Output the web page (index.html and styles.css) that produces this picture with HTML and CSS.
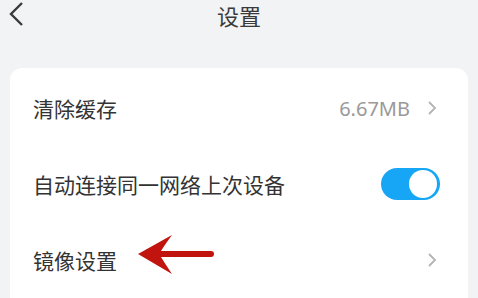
FILE: index.html
```html
<!DOCTYPE html>
<html>
<head lang="zh">
    <meta charset="UTF-8">
    <title>设置</title>
    <link rel="stylesheet" href="styles.css">
</head>
<body>
<div class="header">
    <div class="back">
        <svg width="16" height="26" viewBox="0 0 16 26">
            <path d="M14 2 L3 13 L14 24" fill="none" stroke="#3a3a3a" stroke-width="2.4" stroke-linejoin="miter"/>
        </svg>
    </div>
    <div class="title">设置</div>
</div>

<div class="card">
    <div class="row">
        <span class="label">清除缓存</span>
        <div class="extra">
            <span class="value">6.67MB</span>
            <svg class="more" width="10" height="16" viewBox="0 0 10 16">
                <path d="M2 2 L8 8 L2 14" fill="none" stroke="#b3b3b3" stroke-width="1.8"/>
            </svg>
        </div>
    </div>
    <div class="row">
        <span class="label">自动连接同一网络上次设备</span>
        <div class="switch on">
            <div class="knob"></div>
        </div>
    </div>
    <div class="row mirror">
        <span class="label">镜像设置</span>
        <svg class="more" width="10" height="16" viewBox="0 0 10 16">
            <path d="M2 2 L8 8 L2 14" fill="none" stroke="#b3b3b3" stroke-width="1.8"/>
        </svg>
        <!-- 标注箭头 -->
        <svg class="pointer" width="80" height="44" viewBox="0 0 80 44">
            <line x1="22" y1="21" x2="75" y2="21" stroke="#c2140e" stroke-width="6" stroke-linecap="round"/>
            <path d="M2 21 L36 2 Q28 13 25 18 L25 24 Q28 29 36 41 Z" fill="#c2140e"/>
        </svg>
    </div>
</div>
</body>
</html>
```

FILE: styles.css
```css
* {
    margin: 0;
    padding: 0;
}

body {
    background-color: #f2f3f5;
    font-family: "Noto Sans CJK SC", "Noto Sans", sans-serif;
    color: #333333;
    overflow: hidden;
}

.header {
    height: 30px;
    position: relative;
}

.header .back {
    position: absolute;
    left: 8px;
    top: 1px;
}

.header .title {
    text-align: center;
    font-size: 22px;
    line-height: 30px;
    color: #3a3a3a;
}

.card {
    margin: 38px 10px 0;
    padding-top: 2px;
    background-color: #ffffff;
    border-radius: 12px 12px 0 0;
}

.row {
    height: 76px;
    padding: 0 28px 0 23px;
    display: flex;
    align-items: center;
    justify-content: space-between;
    position: relative;
}

.row .label {
    font-size: 21px;
}

.extra {
    display: flex;
    align-items: center;
    gap: 17px;
}

.value {
    font-family: "Noto Sans", sans-serif;
    font-size: 20px;
    color: #999999;
}

.more {
    display: block;
    margin-right: 3px;
}

.switch {
    width: 59px;
    height: 32px;
    border-radius: 16px;
    background-color: #e5e5e5;
    display: flex;
    align-items: center;
    padding: 0 3px;
    box-sizing: border-box;
}

.switch.on {
    background-color: #17a6f6;
    justify-content: flex-end;
}

.switch .knob {
    width: 28px;
    height: 28px;
    border-radius: 50%;
    background-color: #ffffff;
}

.mirror .pointer {
    position: absolute;
    left: 126px;
    top: 11px;
}
```
